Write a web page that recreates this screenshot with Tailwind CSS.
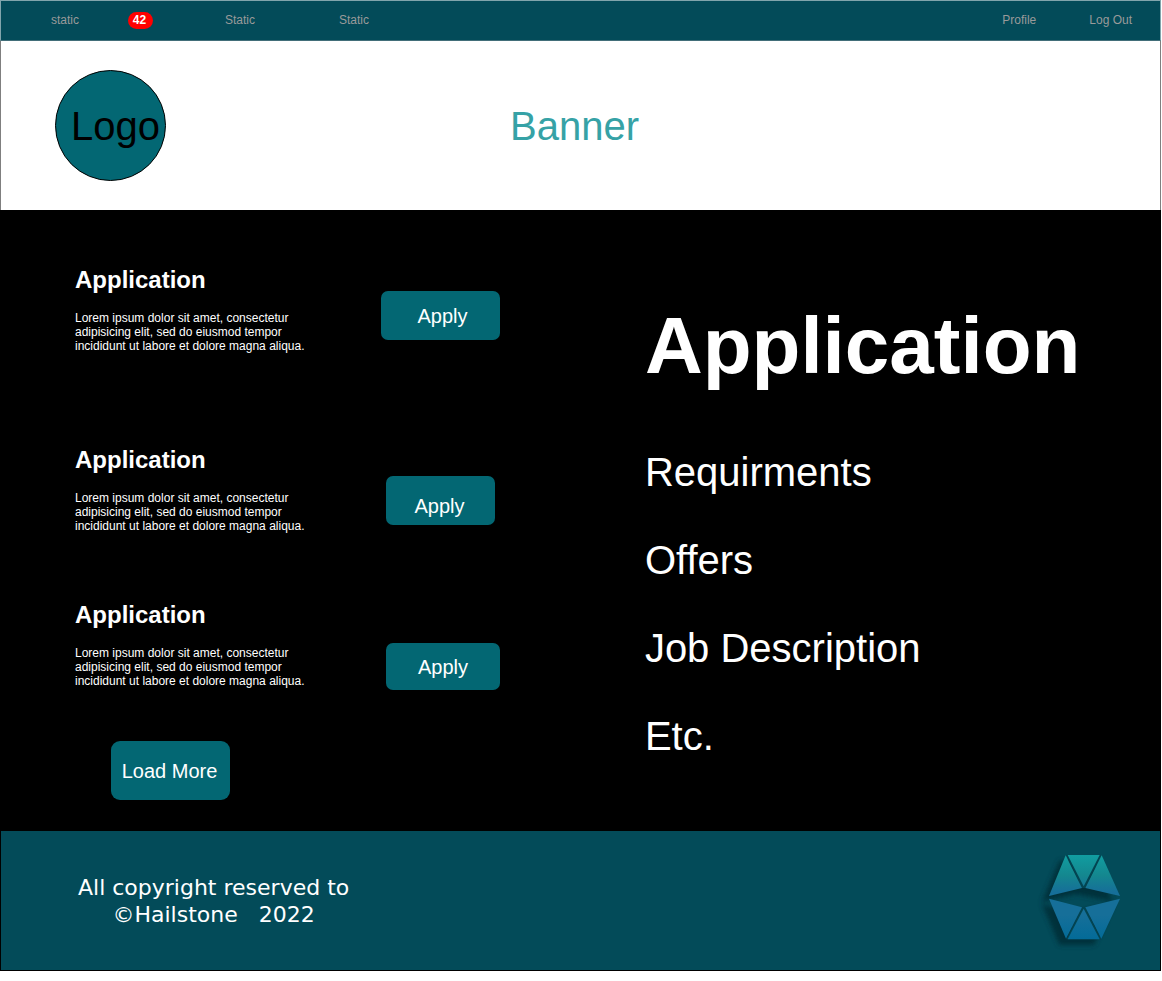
<!DOCTYPE html>
<html lang="en">
<head>
<meta charset="utf-8">
<meta name="viewport" content="width=device-width, initial-scale=1">
<title>Hailstone Applications</title>
<script src="https://cdn.jsdelivr.net/npm/@tailwindcss/browser@4"></script>
</head>
<body class="bg-white pr-px font-['Liberation_Sans',Arial,sans-serif]">
  <nav class="flex h-[41px] items-start border border-[#81a5ac] border-b-[#426e79] bg-[#034b59] pt-[11px] text-xs leading-4 text-[#9a9a9a]">
    <a href="#" class="ml-[50px] w-[77px]">static</a>
    <a href="#" class="w-[25px] rounded-full bg-[#ff0000] pr-0.5 pb-px text-center font-bold text-white">42</a>
    <a href="#" class="ml-[72px] w-[114px]">Static</a>
    <a href="#">Static</a>
    <a href="#" class="ml-auto">Profile</a>
    <a href="#" class="mr-7 ml-[53px]">Log Out</a>
  </nav>

  <header class="grid grid-cols-[1fr_auto_1fr] items-center border-x border-[#7f7f7f] bg-white py-[29px] pr-3 text-[40px] leading-[46px]">
    <div class="ml-[54px] flex size-[111px] items-center justify-center rounded-full border border-black bg-[#036773] pl-2.5 text-black">Logo</div>
    <h1 class="text-[#36a2a6]">Banner</h1>
  </header>

  <main class="grid grid-cols-9 bg-black px-px text-white">
    <section class="col-span-5 pt-14 pb-[31px] pl-[74px]">
      <article class="mb-[93px] flex items-start">
        <div class="w-[306px]">
          <h2 class="mb-[17px] text-2xl leading-[28px] font-bold">Application</h2>
          <p class="w-[240px] text-xs leading-[14px]">Lorem ipsum dolor sit amet, consectetur adipisicing elit, sed do eiusmod tempor incididunt ut labore et dolore magna aliqua.</p>
        </div>
        <button type="button" class="mt-[25px] h-[49px] w-[119px] rounded-[7px] bg-[#036773] pl-1 text-xl leading-6">Apply</button>
      </article>
      <article class="mb-[68px] flex items-start">
        <div class="w-[311px]">
          <h2 class="mb-[17px] text-2xl leading-[28px] font-bold">Application</h2>
          <p class="w-[240px] text-xs leading-[14px]">Lorem ipsum dolor sit amet, consectetur adipisicing elit, sed do eiusmod tempor incididunt ut labore et dolore magna aliqua.</p>
        </div>
        <button type="button" class="mt-[30px] h-[49px] w-[109px] rounded-[7px] bg-[#036773] pt-[11px] pr-0.5 text-xl leading-6">Apply</button>
      </article>
      <article class="mb-[51px] flex items-start">
        <div class="w-[311px]">
          <h2 class="mb-[17px] text-2xl leading-[28px] font-bold">Application</h2>
          <p class="w-[240px] text-xs leading-[14px]">Lorem ipsum dolor sit amet, consectetur adipisicing elit, sed do eiusmod tempor incididunt ut labore et dolore magna aliqua.</p>
        </div>
        <button type="button" class="mt-[42px] h-[47px] w-[114px] rounded-[7px] bg-[#036773] text-xl leading-6">Apply</button>
      </article>
      <button type="button" class="ml-9 block h-[59px] w-[119px] rounded-[9px] bg-[#036773] pr-0.5 text-xl leading-6">Load More</button>
    </section>

    <section class="col-span-4 pt-[88px] text-[40px] leading-[48px]">
      <h2 class="mb-[54px] text-[80px] leading-[96px] font-bold">Application</h2>
      <ul class="flex flex-col gap-10">
        <li>Requirments</li>
        <li>Offers</li>
        <li>Job Description</li>
        <li>Etc.</li>
      </ul>
    </section>
  </main>

  <footer class="flex h-[140px] items-start justify-between border-x border-b border-black bg-[#034b59] pt-[9px] pr-[30px] pl-[77px] text-white">
    <p class="mt-[34px] text-center font-['DejaVu_Sans',Verdana,sans-serif] text-[22px] leading-[27px]">All copyright reserved to<br>©Hailstone &nbsp;&nbsp;2022</p>
    <svg class="h-[120px] w-[100px]" viewBox="0 0 300 360" role="img" aria-label="Hailstone">
      <defs>
        <linearGradient id="upper" gradientUnits="userSpaceOnUse" x1="0" y1="45" x2="0" y2="168">
          <stop offset="0" stop-color="#119da0"/>
          <stop offset="0.5" stop-color="#14878f"/>
          <stop offset="0.9" stop-color="#166f99"/>
        </linearGradient>
        <linearGradient id="lower" gradientUnits="userSpaceOnUse" x1="0" y1="176" x2="0" y2="298">
          <stop offset="0.4" stop-color="#166f99"/>
          <stop offset="1" stop-color="#036b98"/>
        </linearGradient>
        <filter id="soft" x="-30%" y="-30%" width="160%" height="160%">
          <feGaussianBlur stdDeviation="8"/>
        </filter>
      </defs>
      <g filter="url(#soft)" fill="#022f38" opacity="0.9" transform="translate(-21 17)">
        <path d="M109 45H213L270 168 161 145 57 168Z"/>
        <path d="M57 176 161 202 270 176 213 298H109Z"/>
      </g>
      <g fill="#034552">
        <path d="M109 46H213L166 144H156Z"/>
        <path d="M156 202H166L213 298H109Z"/>
      </g>
      <g fill="url(#upper)">
        <path d="M107 46 57 168 156 144Z"/>
        <path d="M113 45H209L161 139Z"/>
        <path d="M215 46 270 168 166 144Z"/>
      </g>
      <g fill="url(#lower)">
        <path d="M57 176 156 202 108 296Z"/>
        <path d="M161 206 209 298H113Z"/>
        <path d="M270 176 166 202 214 296Z"/>
      </g>
    </svg>
  </footer>
</body>
</html>
